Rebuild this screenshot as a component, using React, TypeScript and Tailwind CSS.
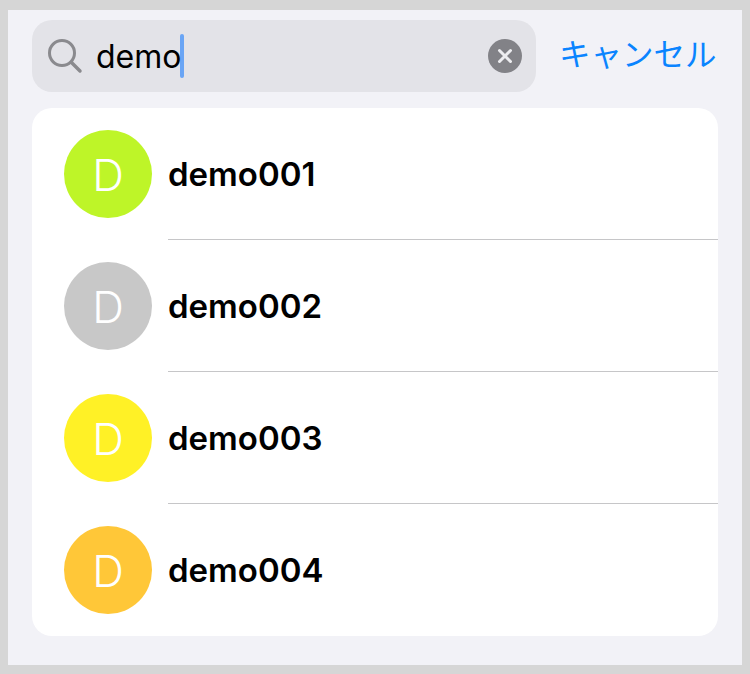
const rows = [
  { name: "demo001", color: "bg-[#bef528]" },
  { name: "demo002", color: "bg-[#c8c8c8]" },
  { name: "demo003", color: "bg-[#fff126]" },
  { name: "demo004", color: "bg-[#ffc738]" },
];

export default function App() {
  return (
    <div className="h-[674px] w-[750px] bg-[#d6d6d6] pt-[10px] pr-[8px] pb-[9px] pl-[8px] font-['Inter','Noto_Sans_CJK_JP',sans-serif]">
      <div className="flex h-full flex-col bg-[#f2f2f7] pt-[10px] pr-[24px] pl-[24px]">
        <div className="flex items-center">
          <div className="flex h-[72px] w-[504px] items-center rounded-[20px] bg-[#e3e3e8] pr-[14px] pl-[15px]">
            <svg width="36" height="36" viewBox="0 0 36 36" fill="none" stroke="#8a8a8e" strokeWidth="3" strokeLinecap="round">
              <circle cx="15" cy="15" r="12.5" />
              <path d="M24.5 24.5 L33 33" strokeWidth="3.5" />
            </svg>
            <span className="ml-[13px] translate-y-[1px] text-[32px] leading-none text-black">demo</span>
            <span className="-ml-[1px] h-[44px] w-[4px] rounded-full bg-[#6aa5f5]" />
            <span className="ml-auto flex h-[34px] w-[34px] items-center justify-center rounded-full bg-[#828287]">
              <svg width="16" height="16" viewBox="0 0 16 16" stroke="#ededf0" strokeWidth="3" strokeLinecap="round">
                <path d="M2.5 2.5 L13.5 13.5 M13.5 2.5 L2.5 13.5" />
              </svg>
            </span>
          </div>
          <span className="ml-[23px] -translate-y-[3px] text-[31.5px] leading-none font-['Noto_Sans_CJK_JP',sans-serif] whitespace-nowrap text-[#0a84ff]">キャンセル</span>
        </div>
        <div className="mt-[16px] w-[686px] rounded-[20px] bg-white">
          {rows.map((r, i) => (
            <div key={r.name} className="flex h-[132px] items-center pl-[32px]">
              <div className={`flex h-[88px] w-[88px] shrink-0 items-center justify-center rounded-full pt-[1px] text-[44px] leading-none font-light text-white ${r.color}`}>D</div>
              <div className={`ml-[16px] flex h-full flex-1 items-center pt-[2px] text-[33px] font-semibold text-black ${i < 3 ? "border-b border-[#c6c6c8]" : ""}`}>
                <span>{r.name}</span>
              </div>
            </div>
          ))}
        </div>
      </div>
    </div>
  );
}
